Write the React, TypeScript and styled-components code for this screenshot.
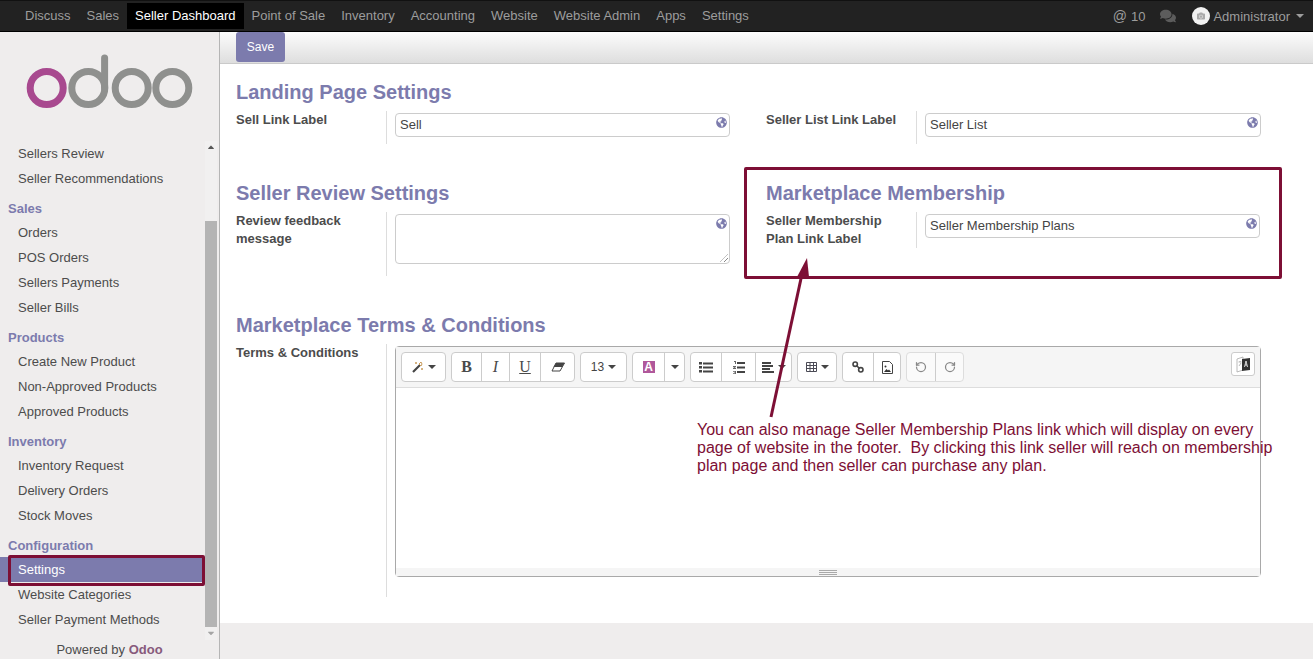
import React from "react";
import styled, { createGlobalStyle } from "styled-components";
import { FaGlobeAmericas, FaComments, FaCamera, FaCaretDown, FaCaretUp } from "react-icons/fa";
import { RotateCcw, RotateCw } from "lucide-react";

const PURPLE = "#7c7bad";
const MAROON = "#7d0f35";

const GlobalStyle = createGlobalStyle`
  html, body { margin: 0; padding: 0; background: #fff; }
  body { font-family: "Liberation Sans", Arial, sans-serif; font-size: 13px; color: #4c4c4c; }
  * { box-sizing: border-box; }
`;

const Page = styled.div`
  position: relative;
  width: 1313px;
  height: 659px;
  overflow: hidden;
  display: flex;
  flex-direction: column;
`;

const TopBar = styled.nav`
  flex: 0 0 32px;
  display: flex;
  align-items: center;
  padding: 0 0 0 17px;
  background: #222;
  border-top: 1px solid #111;
  border-bottom: 1px solid #000;
`;

const TopLink = styled.a<{ $active?: boolean }>`
  height: 26px;
  line-height: 26px;
  padding: 0 8px;
  color: ${(p) => (p.$active ? "#fff" : "#9d9d9d")};
  background: ${(p) => (p.$active ? "#000" : "transparent")};
`;

const TopRight = styled.div`
  margin-left: auto;
  display: flex;
  align-items: center;
  color: #9d9d9d;
  padding-right: 9px;
`;

const AtCount = styled.span`
  display: flex;
  align-items: baseline;
  gap: 4px;
  margin-right: 15px;
  & > b { font-weight: normal; font-size: 14px; }
`;

const Avatar = styled.span`
  width: 18px;
  height: 18px;
  margin: 0 3px 0 16px;
  border-radius: 50%;
  background: #f2f2f2;
  color: #aaa;
  display: flex;
  align-items: center;
  justify-content: center;
  font-size: 8px;
`;

const Body = styled.div`
  flex: 1;
  display: flex;
  min-height: 0;
`;

const Sidebar = styled.aside`
  flex: 0 0 220px;
  display: flex;
  flex-direction: column;
  background: #efeded;
  border-right: 1px solid #b5b5b5;
`;

const LogoBlock = styled.div`
  flex: 0 0 109px;
  & > svg { display: block; }
`;

const MenuWrap = styled.div`
  flex: 0 0 499px;
  display: flex;
  overflow: hidden;
`;

const MenuList = styled.div`
  flex: 0 0 205px;
`;

const MenuHeading = styled.div`
  height: 24px;
  line-height: 26px;
  margin-top: 5px;
  padding-left: 8px;
  color: ${PURPLE};
  font-weight: bold;
`;

const MenuItem = styled.div<{ $active?: boolean }>`
  height: 25px;
  line-height: 25px;
  padding-left: 18px;
  color: ${(p) => (p.$active ? "#fff" : "#4c4c4c")};
  background: ${(p) => (p.$active ? PURPLE : "transparent")};
`;

const ScrollTrack = styled.div`
  flex: 0 0 12px;
  display: flex;
  flex-direction: column;
  align-items: center;
  font-size: 10px;
  background: #f1f0f0;
`;

const ScrollArrow = styled.div<{ $dim?: boolean }>`
  flex: 0 0 12px;
  display: flex;
  align-items: center;
  justify-content: center;
  color: ${(p) => (p.$dim ? "#a5a5a5" : "#555")};
`;

const ScrollSpacer = styled.div`
  flex: 0 0 68px;
`;

const ScrollThumb = styled.div`
  flex: 0 0 406px;
  width: 100%;
  background: #b4b4b4;
`;

const Powered = styled.div`
  flex: 1;
  text-align: center;
  line-height: 19px;
  & > b { color: #875a7b; }
`;

const Main = styled.main`
  flex: 1;
  display: flex;
  flex-direction: column;
  background: #efeded;
`;

const ActionBar = styled.div`
  flex: 0 0 32px;
  padding-left: 16px;
  background: linear-gradient(#fcfcfc, #dedede);
  border-bottom: 1px solid #cacaca;
`;

const SaveButton = styled.button`
  display: block;
  width: 49px;
  height: 30px;
  border: 0;
  border-radius: 3px;
  background: ${PURPLE};
  color: #fff;
  font: 12px "Liberation Sans", Arial, sans-serif;
`;

const Sheet = styled.div`
  height: 559px;
  background: #fff;
  padding: 16px 0 0 16px;
  display: grid;
  grid-template-columns: 494px 495px;
  grid-auto-rows: min-content;
  column-gap: 36px;
  row-gap: 37px;
`;

const Group = styled.section<{ $wide?: boolean }>`
  grid-column: ${(p) => (p.$wide ? "1 / span 2" : "auto")};
`;

const Heading = styled.h2`
  margin: 0 0 7px;
  height: 24px;
  line-height: 24px;
  font-size: 20px;
  font-weight: bold;
  color: ${PURPLE};
`;

const FormRow = styled.div`
  display: flex;
`;

const Label = styled.label`
  flex: 0 0 150px;
  font-weight: bold;
  line-height: 18px;
  padding-right: 14px;
`;

const Cell = styled.div<{ $bottom: number; $right?: number }>`
  flex: 1;
  border-left: 1px solid #ddd;
  padding: 2px ${(p) => p.$right ?? 0}px ${(p) => p.$bottom}px 8px;
`;

const InputBox = styled.div<{ $height?: number }>`
  position: relative;
  height: ${(p) => p.$height ?? 24}px;
  padding: 0 20px 0 4px;
  line-height: 21px;
  border: 1px solid #ccc;
  border-radius: 4px;
  color: #444;
`;

const Globe = styled(FaGlobeAmericas)`
  position: absolute;
  right: 2px;
  top: 3px;
  width: 11px;
  height: 11px;
  color: ${PURPLE};
`;

const Grip = styled.span`
  position: absolute;
  right: 1px;
  bottom: 1px;
  width: 8px;
  height: 8px;
  background: repeating-linear-gradient(135deg, transparent 0 2px, #888 2px 3px);
  clip-path: polygon(100% 0, 100% 100%, 0 100%);
`;

const Editor = styled.div`
  border: 1px solid #a9a9a9;
  border-radius: 4px;
`;

const EditorBar = styled.div`
  height: 41px;
  display: flex;
  align-items: flex-start;
  gap: 5px;
  padding: 5px 5px 0;
  background: #f5f5f5;
  border-bottom: 1px solid #ddd;
`;

const ToolGroup = styled.div<{ $faded?: boolean }>`
  display: flex;
  height: 30px;
  background: ${(p) => (p.$faded ? "#fafafa" : "#fff")};
  border: 1px solid ${(p) => (p.$faded ? "#ddd" : "#ccc")};
  border-radius: 4px;
  color: ${(p) => (p.$faded ? "#888" : "#444")};
`;

const Tool = styled.div<{ $w: number }>`
  width: ${(p) => p.$w}px;
  display: flex;
  align-items: center;
  justify-content: center;
  gap: 4px;
  font-size: 12px;
  & + & { border-left: 1px solid #ccc; }
`;

const SerifGlyph = styled.span<{ $italic?: boolean; $under?: boolean; $bold?: boolean }>`
  font-family: "Liberation Serif", serif;
  font-size: 16px;
  font-style: ${(p) => (p.$italic ? "italic" : "normal")};
  font-weight: ${(p) => (p.$bold ? "bold" : "normal")};
  text-decoration: ${(p) => (p.$under ? "underline" : "none")};
  color: #4a4a4a;
`;

const ColorA = styled.span`
  width: 12px;
  height: 12px;
  line-height: 12px;
  text-align: center;
  background: #b0589b;
  color: #fff;
  font-size: 12px;
  font-weight: bold;
`;

const Caret = styled.span<{ $tone?: string; $gap?: number }>`
  width: 0;
  height: 0;
  margin-left: ${(p) => p.$gap ?? 0}px;
  border-left: 4px solid transparent;
  border-right: 4px solid transparent;
  border-top: 4px solid ${(p) => p.$tone ?? "#444"};
`;

const LangButton = styled.div`
  margin-left: auto;
  width: 24px;
  height: 24px;
  display: flex;
  align-items: center;
  justify-content: center;
  background: #fff;
  border: 1px solid #ccc;
  border-radius: 3px;
`;

const EditArea = styled.div`
  height: 180px;
  background: #fff;
`;

const ResizeBar = styled.div`
  height: 8px;
  display: flex;
  justify-content: center;
  align-items: center;
  background: #f5f5f5;
  & > i {
    display: block;
    width: 18px;
    height: 5px;
    border-top: 1px solid #a9a9a9;
    border-bottom: 1px solid #a9a9a9;
    background: linear-gradient(transparent 1px, #a9a9a9 1px, #a9a9a9 2px, transparent 2px);
  }
`;

const Callout = styled.div`
  position: absolute;
  left: 744px;
  top: 167px;
  width: 538px;
  height: 112px;
  border: 3px solid ${MAROON};
  border-radius: 2px;
`;

const SettingsMark = styled.div`
  position: absolute;
  left: 8px;
  top: 555px;
  width: 197px;
  height: 31px;
  border: 3px solid ${MAROON};
  border-radius: 2px;
`;

const ArrowLayer = styled.svg`
  position: absolute;
  left: 760px;
  top: 250px;
`;

const Note = styled.div`
  position: absolute;
  left: 697px;
  top: 421px;
  width: 600px;
  font-size: 16px;
  line-height: 18px;
  color: ${MAROON};
  white-space: pre;
`;

const topLinks = ["Discuss", "Sales", "Seller Dashboard", "Point of Sale", "Inventory", "Accounting", "Website", "Website Admin", "Apps", "Settings"];

const menu: Array<{ title?: string; items: string[] }> = [
  { items: ["Sellers Review", "Seller Recommendations"] },
  { title: "Sales", items: ["Orders", "POS Orders", "Sellers Payments", "Seller Bills"] },
  { title: "Products", items: ["Create New Product", "Non-Approved Products", "Approved Products"] },
  { title: "Inventory", items: ["Inventory Request", "Delivery Orders", "Stock Moves"] },
  { title: "Configuration", items: ["Settings", "Website Categories", "Seller Payment Methods"] },
];

const Logo = () => (
  <svg width="219" height="109" viewBox="0 0 219 109" fill="none" strokeWidth="7">
    <circle cx="46.7" cy="56" r="16.5" stroke="#a8498f" />
    <circle cx="88.3" cy="56" r="16.5" stroke="#8f908e" />
    <path d="M104.6 56V26" stroke="#8f908e" strokeLinecap="round" />
    <circle cx="131.7" cy="56" r="16.5" stroke="#8f908e" />
    <circle cx="172.3" cy="56" r="16.5" stroke="#8f908e" />
  </svg>
);

const WandIcon = () => (
  <svg width="12" height="12" viewBox="0 0 12 12">
    <path d="M1 11 8 4" stroke="#444" strokeWidth="2.2" />
    <path d="M9 1l1 2-1 2-2-2zM3 2h2M4 1v2M10 7v2M9 8h2" stroke="#c79a5a" strokeWidth="1" fill="none" />
  </svg>
);

const EraserIcon = () => (
  <svg width="14" height="10" viewBox="0 0 14 10">
    <path d="M5 1h8.500L9 9H1z" fill="#fff" stroke="#444" strokeWidth="1" />
    <path d="M5 1h8.500L11 5H2.500z" fill="#444" />
  </svg>
);

const BulletsIcon = () => (
  <svg width="14" height="11" viewBox="0 0 14 11" fill="#444">
    <rect x="0" y="0" width="3" height="2.500" /><rect x="4" y="0.500" width="10" height="2" />
    <rect x="0" y="4" width="3" height="2.500" /><rect x="4" y="4.500" width="10" height="2" />
    <rect x="0" y="8" width="3" height="2.500" /><rect x="4" y="8.500" width="10" height="2" />
  </svg>
);

const NumbersIcon = () => (
  <svg width="12" height="13" viewBox="0 0 12 13" fill="#444">
    <path d="M1 0h2v3H2V1H1zM0 5h3v1L1.500 7H3v1H0V7l1.500-1H0zM0 10h3v3H0v-.7h2v-.4H1v-.5h1v-.7H0z" fill="#666" />
    <rect x="4" y="1" width="8" height="2" /><rect x="4" y="5.500" width="8" height="2" /><rect x="4" y="10" width="8" height="2" />
  </svg>
);

const AlignIcon = () => (
  <svg width="12" height="11" viewBox="0 0 12 11" fill="#444">
    <rect width="9" height="2" /><rect y="3" width="11" height="2" /><rect y="6" width="8" height="2" /><rect y="9" width="12" height="2" />
  </svg>
);

const TableIcon = () => (
  <svg width="11" height="10" viewBox="0 0 11 10" fill="none" stroke="#4a4a55" strokeWidth="1">
    <path d="M.5.500h10v9H.5zM.5 3.500h10M.5 6.500h10M4 .500v9M7.500.500v9" />
  </svg>
);

const LinkIcon = () => (
  <svg width="12" height="12" viewBox="0 0 12 12" fill="none" stroke="#444" strokeWidth="1.600">
    <circle cx="3.200" cy="3.200" r="2.200" />
    <circle cx="8.800" cy="8.800" r="2.200" />
    <path d="M4.500 4.500l3 3" />
  </svg>
);

const ImageIcon = () => (
  <svg width="11" height="13" viewBox="0 0 11 13">
    <path d="M.5.500h7l3 3v9H.5z" fill="#fff" stroke="#444" />
    <path d="M2 11l2.500-3 1.500 1.500 1-1L9 11z" fill="#333" />
    <circle cx="3.500" cy="5.500" r="1" fill="#333" />
  </svg>
);

const LangIcon = () => (
  <svg width="15" height="17" viewBox="0 0 15 17">
    <path d="M1 3l6-2v13l-6 2z" fill="#fff" stroke="#aaa" strokeWidth="0.800" />
    <path d="M6 3l8-1v12l-8 1z" fill="#333" />
    <path d="M8.500 11l1.500-6 1.500 6M9 9h2" stroke="#fff" strokeWidth="0.800" fill="none" />
    <path d="M2.500 6h3M4 5v1M3 10l2-3" stroke="#999" strokeWidth="0.700" fill="none" />
  </svg>
);

const App: React.FC = () => {
  return (
    <Page>
      <GlobalStyle />
      <TopBar>
        {topLinks.map((l) => (
          <TopLink key={l} $active={l === "Seller Dashboard"}>{l}</TopLink>
        ))}
        <TopRight>
          <AtCount><b>@</b>10</AtCount>
          <FaComments size={16} color="#5c5c5c" />
          <Avatar><FaCamera /></Avatar>
          Administrator
          <Caret $tone="#9d9d9d" $gap={6} />
        </TopRight>
      </TopBar>
      <Body>
        <Sidebar>
          <LogoBlock><Logo /></LogoBlock>
          <MenuWrap>
            <MenuList>
              {menu.map((sec, i) => (
                <div key={i}>
                  {sec.title && <MenuHeading>{sec.title}</MenuHeading>}
                  {sec.items.map((it) => (
                    <MenuItem key={it} $active={it === "Settings"}>{it}</MenuItem>
                  ))}
                </div>
              ))}
            </MenuList>
            <ScrollTrack>
              <ScrollArrow><FaCaretUp /></ScrollArrow>
              <ScrollSpacer />
              <ScrollThumb />
              <ScrollArrow $dim><FaCaretDown /></ScrollArrow>
            </ScrollTrack>
          </MenuWrap>
          <Powered>Powered by <b>Odoo</b></Powered>
        </Sidebar>
        <Main>
          <ActionBar><SaveButton>Save</SaveButton></ActionBar>
          <Sheet>
            <Group>
              <Heading>Landing Page Settings</Heading>
              <FormRow>
                <Label>Sell Link Label</Label>
                <Cell $bottom={7}><InputBox>Sell<Globe /></InputBox></Cell>
              </FormRow>
            </Group>
            <Group>
              <Heading />
              <FormRow>
                <Label>Seller List Link Label</Label>
                <Cell $bottom={7}><InputBox>Seller List<Globe /></InputBox></Cell>
              </FormRow>
            </Group>
            <Group>
              <Heading>Seller Review Settings</Heading>
              <FormRow>
                <Label>Review feedback message</Label>
                <Cell $bottom={12}><InputBox $height={50}><Globe /><Grip /></InputBox></Cell>
              </FormRow>
            </Group>
            <Group>
              <Heading>Marketplace Membership</Heading>
              <FormRow>
                <Label>Seller Membership Plan Link Label</Label>
                <Cell $bottom={10} $right={1}><InputBox>Seller Membership Plans<Globe /></InputBox></Cell>
              </FormRow>
            </Group>
            <Group $wide>
              <Heading>Marketplace Terms &amp; Conditions</Heading>
              <FormRow>
                <Label>Terms &amp; Conditions</Label>
                <Cell $bottom={20}>
                  <Editor>
                    <EditorBar>
                      <ToolGroup><Tool $w={43}><WandIcon /><Caret /></Tool></ToolGroup>
                      <ToolGroup>
                        <Tool $w={29}><SerifGlyph $bold>B</SerifGlyph></Tool>
                        <Tool $w={28}><SerifGlyph $italic>I</SerifGlyph></Tool>
                        <Tool $w={31}><SerifGlyph $under>U</SerifGlyph></Tool>
                        <Tool $w={34}><EraserIcon /></Tool>
                      </ToolGroup>
                      <ToolGroup><Tool $w={45}>13<Caret /></Tool></ToolGroup>
                      <ToolGroup>
                        <Tool $w={31}><ColorA>A</ColorA></Tool>
                        <Tool $w={20}><Caret /></Tool>
                      </ToolGroup>
                      <ToolGroup>
                        <Tool $w={30}><BulletsIcon /></Tool>
                        <Tool $w={34}><NumbersIcon /></Tool>
                        <Tool $w={36}><AlignIcon /><Caret /></Tool>
                      </ToolGroup>
                      <ToolGroup><Tool $w={38}><TableIcon /><Caret /></Tool></ToolGroup>
                      <ToolGroup>
                        <Tool $w={30}><LinkIcon /></Tool>
                        <Tool $w={27}><ImageIcon /></Tool>
                      </ToolGroup>
                      <ToolGroup $faded>
                        <Tool $w={28}><RotateCcw size={12} strokeWidth={2.5} /></Tool>
                        <Tool $w={28}><RotateCw size={12} strokeWidth={2.5} /></Tool>
                      </ToolGroup>
                      <LangButton><LangIcon /></LangButton>
                    </EditorBar>
                    <EditArea />
                    <ResizeBar><i /></ResizeBar>
                  </Editor>
                </Cell>
              </FormRow>
            </Group>
          </Sheet>
        </Main>
      </Body>
      <Callout />
      <SettingsMark />
      <ArrowLayer width="60" height="175" viewBox="0 0 60 175">
        <line x1="11" y1="167" x2="42" y2="24" stroke={MAROON} strokeWidth="3" />
        <polygon points="47,8 49,27 37,27" fill={MAROON} />
      </ArrowLayer>
      <Note>
        {"You can also manage Seller Membership Plans link which will display on every\npage of website in the footer.  By clicking this link seller will reach on membership\nplan page and then seller can purchase any plan."}
      </Note>
    </Page>
  );
};

export default App;
